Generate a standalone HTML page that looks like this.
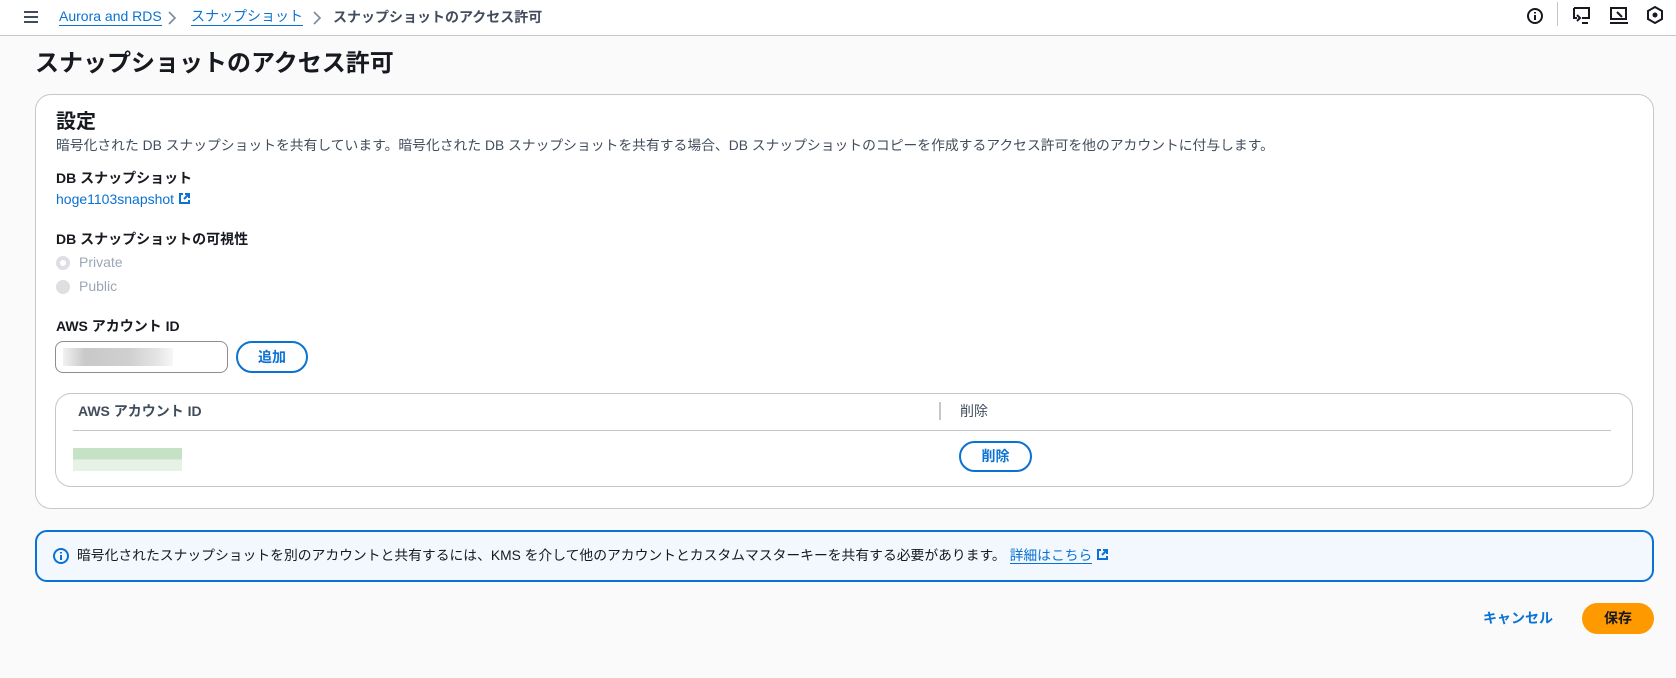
<!DOCTYPE html>
<html><head><meta charset="utf-8"><style>
*{box-sizing:border-box;margin:0;padding:0}
body{width:1676px;height:678px;background:#fafafa;font-family:"Liberation Sans","Noto Sans CJK JP",sans-serif;color:#16191f;font-size:14px;position:relative;overflow:hidden}
.abs{position:absolute}
.hdr{left:0;top:0;width:1676px;height:36px;background:#fff;border-bottom:1px solid #c6c6cd}
a{color:#0972d3;text-decoration:none}
.bc{top:7px;font-size:14px;line-height:20px}
.card{background:#fff;border:1px solid #c6c6cd;border-radius:16px}
.lbl{font-weight:bold;font-size:14px;line-height:20px}
.btn{border:2px solid #0972d3;border-radius:16px;color:#0972d3;font-weight:bold;text-align:center;font-size:14px;background:#fff}
.radio{width:14px;height:14px;border-radius:50%;background:#dedee3}
.gray{color:#9ba7b6}
</style></head><body>
<div class="abs hdr"></div>
<svg class="abs" style="left:23px;top:10px" width="16" height="14"><path d="M1 2h14M1 7h14M1 12h14" stroke="#414d5c" stroke-width="2"/></svg>
<a class="abs bc" style="left:59px;border-bottom:1px solid #0972d3;line-height:18px">Aurora and RDS</a>
<svg class="abs" style="left:167px;top:11px" width="10" height="14"><path d="M2 1l6 6-6 6" fill="none" stroke="#7d8998" stroke-width="1.6"/></svg>
<a class="abs bc" style="left:191px;border-bottom:1px solid #0972d3;line-height:18px">スナップショット</a>
<svg class="abs" style="left:312px;top:11px" width="10" height="14"><path d="M2 1l6 6-6 6" fill="none" stroke="#7d8998" stroke-width="1.6"/></svg>
<div class="abs bc" style="left:333px;color:#414d5c;font-weight:bold">スナップショットのアクセス許可</div>
<svg class="abs" style="left:1526px;top:7px" width="18" height="18"><circle cx="9" cy="9" r="7" fill="none" stroke="#16191f" stroke-width="2"/><path d="M9 8v5M9 5v1.5" stroke="#16191f" stroke-width="2"/></svg>
<div class="abs" style="left:1557px;top:2px;width:1px;height:24px;background:#c6c6cd"></div>
<svg class="abs" style="left:1572px;top:6px" width="20" height="20"><path d="M2 2h15v10H10M2 2v10h3" fill="none" stroke="#16191f" stroke-width="2"/><path d="M5 9l3 3-3 3M10 17h6" fill="none" stroke="#16191f" stroke-width="2"/></svg>
<svg class="abs" style="left:1609px;top:6px" width="20" height="20"><path d="M2 2h15v11H2zM1 17h18" fill="none" stroke="#16191f" stroke-width="2"/><path d="M8 6l5 5" stroke="#16191f" stroke-width="2"/></svg>
<svg class="abs" style="left:1646px;top:6px" width="18" height="18"><path d="M9 1l7 4v8l-7 4-7-4V5z" fill="none" stroke="#16191f" stroke-width="2"/><circle cx="9" cy="9" r="2.5" fill="#16191f"/></svg>

<div class="abs" style="left:35px;top:49px;font-size:24px;font-weight:bold;line-height:30px">スナップショットのアクセス許可</div>

<div class="abs card" style="left:35px;top:94px;width:1619px;height:415px"></div>
<div class="abs" style="left:56px;top:109px;font-size:20px;font-weight:bold;line-height:26px">設定</div>
<div class="abs" style="left:56px;top:136px;font-size:13.8px;line-height:20px;color:#414d5c">暗号化された DB スナップショットを共有しています。暗号化された DB スナップショットを共有する場合、DB スナップショットのコピーを作成するアクセス許可を他のアカウントに付与します。</div>
<div class="abs lbl" style="left:56px;top:168px">DB スナップショット</div>
<a class="abs" style="left:56px;top:189px;line-height:20px">hoge1103snapshot <svg width="13" height="13" style="vertical-align:-1px"><path d="M5 2H2v9h9V8M7 2h4v4M11 2L6 7" fill="none" stroke="#0972d3" stroke-width="2"/></svg></a>
<div class="abs lbl" style="left:56px;top:229px">DB スナップショットの可視性</div>
<div class="abs radio" style="left:56px;top:256px;border:4px solid #dedee3;background:#fff"></div>
<div class="abs gray" style="left:79px;top:252px;line-height:20px">Private</div>
<div class="abs radio" style="left:56px;top:280px"></div>
<div class="abs gray" style="left:79px;top:276px;line-height:20px">Public</div>
<div class="abs lbl" style="left:56px;top:316px">AWS アカウント ID</div>
<div class="abs" style="left:55px;top:341px;width:173px;height:32px;border:1px solid #8c8c94;border-radius:8px;background:#fff"></div>
<div class="abs" style="left:63px;top:348px;width:110px;height:18px;background:linear-gradient(90deg,#eee,#bbb 20%,#c4c4c4 60%,#ddd 85%,#f5f5f5);opacity:.8"></div>
<div class="abs btn" style="left:236px;top:341px;width:72px;height:32px;line-height:28px">追加</div>

<div class="abs card" style="left:55px;top:393px;width:1578px;height:94px"></div>
<div class="abs lbl" style="left:78px;top:401px;color:#414d5c">AWS アカウント ID</div>
<div class="abs" style="left:939px;top:402px;width:2px;height:18px;background:#c6c6cd"></div>
<div class="abs" style="left:960px;top:401px;color:#414d5c;line-height:20px">削除</div>
<div class="abs" style="left:73px;top:430px;width:1538px;height:1px;background:#c6c6cd"></div>
<div class="abs" style="left:73px;top:448px;width:109px;height:23px;background:linear-gradient(180deg,#c0dfc0 0,#c0dfc0 50%,#e4f1e4 50%);opacity:.9"></div>
<div class="abs btn" style="left:959px;top:441px;width:73px;height:31px;line-height:27px">削除</div>

<div class="abs" style="left:35px;top:530px;width:1619px;height:52px;border:2px solid #0972d3;border-radius:12px;background:#f2f8fd"></div>
<svg class="abs" style="left:52px;top:547px" width="18" height="18"><circle cx="9" cy="9" r="7" fill="none" stroke="#0972d3" stroke-width="2"/><path d="M9 8v5M9 5v1.5" stroke="#0972d3" stroke-width="2"/></svg>
<div class="abs" style="left:77px;top:546px;line-height:20px;font-size:13.8px">暗号化されたスナップショットを別のアカウントと共有するには、KMS を介して他のアカウントとカスタムマスターキーを共有する必要があります。 <a style="border-bottom:1px solid #0972d3">詳細はこちら</a> <svg width="13" height="13" style="vertical-align:-1px"><path d="M5 2H2v9h9V8M7 2h4v4M11 2L6 7" fill="none" stroke="#0972d3" stroke-width="2"/></svg></div>

<div class="abs" style="left:1483px;top:608px;color:#0972d3;font-weight:bold;line-height:20px">キャンセル</div>
<div class="abs" style="left:1582px;top:603px;width:72px;height:31px;border-radius:16px;background:#ff9900;text-align:center;line-height:31px;font-weight:bold">保存</div>
</body></html>
